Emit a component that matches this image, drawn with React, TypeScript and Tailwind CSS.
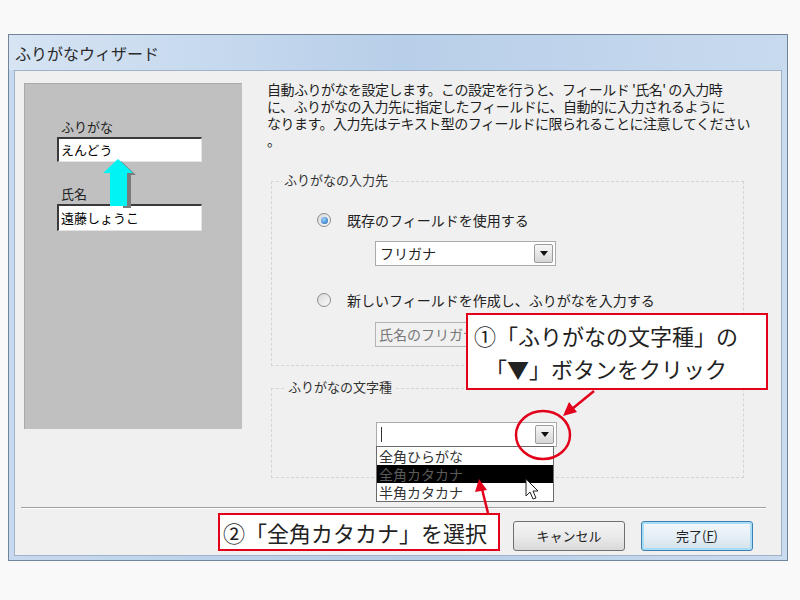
import React from "react";

// Win7 style combo arrow button
function DropButton() {
  return (
    <div className="flex h-full w-[19px] items-center justify-center rounded-[2px] border border-[#9c9c9c] bg-linear-to-b from-[#f7f7f7] to-[#d6d6d6]">
      <svg width="8" height="5" viewBox="0 0 8 5">
        <path d="M0 0h8L4 5z" fill="#111" />
      </svg>
    </div>
  );
}

function Combo({ value, className = "" }: { value?: React.ReactNode; className?: string }) {
  return (
    <div className={`flex h-[25px] w-[181px] items-stretch border border-[#ababab] bg-white p-[2px] ${className}`}>
      <div className="flex flex-1 items-center pl-[2px] text-[14px] text-[#222]">{value}</div>
      <DropButton />
    </div>
  );
}

function Radio({ checked }: { checked?: boolean }) {
  return (
    <div className="flex h-[14px] w-[14px] items-center justify-center rounded-full border border-[#8c8c8c] bg-linear-to-br from-[#d8d8d8] to-[#fbfbfb]">
      {checked && (
        <div className="h-[7px] w-[7px] rounded-full bg-[radial-gradient(circle_at_40%_35%,#9ad6ff,#1a5fb0)]" />
      )}
    </div>
  );
}

function SunkenBox({ text, className = "" }: { text: string; className?: string }) {
  return (
    <div
      className={`ml-[32px] flex w-[145px] items-center border-t-2 border-l-2 border-r border-b border-t-[#3a3a3a] border-l-[#3a3a3a] border-r-[#e4e4e4] border-b-[#e4e4e4] bg-white pl-[2px] text-[13px] text-black ${className}`}
    >
      {text}
    </div>
  );
}

function GroupBox({
  label,
  labelLeft,
  className = "",
  children,
}: {
  label: string;
  labelLeft: string;
  className?: string;
  children?: React.ReactNode;
}) {
  return (
    <div className={`relative ml-[4px] w-[473px] border border-dashed border-[#d4d4d4] ${className}`}>
      <span className={`absolute top-[-10px] bg-[#f0f0f0] px-[2px] text-[13px] leading-[16px] text-[#333] ${labelLeft}`}>
        {label}
      </span>
      {children}
    </div>
  );
}

export default function App() {
  return (
    <div className="relative h-[600px] w-[800px] overflow-hidden bg-[#f9f9f9] font-['Noto_Sans_CJK_JP','Noto_Sans',sans-serif]">
      {/* window */}
      <div className="ml-[8px] mt-[34px] flex h-[527px] w-[780px] flex-col border border-[#71849a] bg-linear-to-r from-[#c6d9ee] via-[#b6cde8] to-[#c9dbef]">
        {/* title bar */}
        <div className="flex h-[35px] items-center bg-linear-to-r from-[#d6e4f3] via-[#b8cfe9] to-[#c8daee] pl-[6px] pt-[1px] text-[16px] text-[#2a2a2a]">
          ふりがなウィザード
        </div>

        {/* client area */}
        <div className="mx-[5px] mb-[4px] flex flex-1 flex-col border border-[#9fb2c7] bg-[#f0f0f0]">
          <div className="flex h-[436px] pl-[9px] pt-[12px]">
            {/* left illustration */}
            <div className="relative h-[346px] w-[218px] border-t border-l border-t-[#aaaaaa] border-l-[#aaaaaa] bg-[#c0c0c0] pt-[35px]">
              <div className="ml-[36px] text-[13px] leading-[16px] text-[#222]">ふりがな</div>
              <SunkenBox text="えんどう" className="mt-[2px] h-[25px]" />
              <div className="ml-[36px] mt-[24px] text-[13px] leading-[16px] text-[#222]">氏名</div>
              <SunkenBox text="遠藤しょうこ" className="mt-[2px] h-[27px]" />
              <svg className="absolute left-[75px] top-[74px]" width="40" height="52" viewBox="0 0 40 52">
                <polygon points="21,3 36,17 31,17 31,50 23,50 23,17" fill="#7a7a7a" />
                <polygon points="18,1 33,15 27,15 27,48 10,48 10,15 3,15" fill="#00f4f4" />
              </svg>
            </div>

            {/* right column */}
            <div className="ml-[25px] w-[477px]">
              <p className="-mt-[2px] whitespace-nowrap text-[14px] leading-[17px] tracking-[-0.5px] text-[#1e1e1e]">
                自動ふりがなを設定します。この設定を行うと、フィールド '氏名' の入力時
                <br />
                に、ふりがなの入力先に指定したフィールドに、自動的に入力されるように
                <br />
                なります。入力先はテキスト型のフィールドに限られることに注意してください
                <br />。
              </p>

              <GroupBox label="ふりがなの入力先" labelLeft="left-[10px]" className="mt-[32px] h-[185px]">
                <div className="mt-[29px] flex h-[18px] items-center gap-[16px] pl-[45px] text-[14px] text-[#222]">
                  <Radio checked />
                  <span>既存のフィールドを使用する</span>
                </div>
                <Combo value="フリガナ" className="ml-[103px] mt-[12px]" />
                <div className="mt-[25px] flex h-[18px] items-center gap-[16px] pl-[45px] text-[14px] text-[#222]">
                  <Radio />
                  <span>新しいフィールドを作成し、ふりがなを入力する</span>
                </div>
                <div className="ml-[103px] mt-[13px] flex h-[25px] w-[181px] items-center border border-[#b4b4b4] bg-[#f0f0f0] pl-[3px] text-[14px] text-[#777]">
                  氏名のフリガナ
                </div>
              </GroupBox>

              <GroupBox label="ふりがなの文字種" labelLeft="left-[14px]" className="mt-[22px] h-[90px]">
                <Combo
                  value={<span className="h-[15px] w-[1px] bg-[#333]" />}
                  className="ml-[104px] mt-[33px] h-[24px] w-[178px]"
                />
                <div className="absolute left-[104px] top-[57px] z-10 w-[178px] border border-[#6a6a6a] bg-white text-[14px] leading-[18px]">
                  <div className="pl-[2px] text-[#333]">全角ひらがな</div>
                  <div className="bg-black pl-[2px] text-[#5a5a5a]">全角カタカナ</div>
                  <div className="pl-[2px] text-[#333]">半角カタカナ</div>
                </div>
              </GroupBox>
            </div>
          </div>

          {/* separator */}
          <div className="ml-[6px] mr-[15px] border-t border-b border-t-[#a0a0a0] border-b-white" />

          {/* buttons */}
          <div className="mt-[12px] flex justify-end gap-[16px] pr-[28px]">
            <button className="h-[30px] w-[112px] rounded-[3px] border border-[#707070] bg-linear-to-b from-[#f3f3f3] via-[#ebebeb] to-[#d9d9d9] text-[13px] text-[#222]">
              キャンセル
            </button>
            <button className="h-[30px] w-[112px] rounded-[3px] border border-[#3c7fb1] bg-linear-to-b from-[#f2f8fc] via-[#e6eff6] to-[#d4e2ec] text-[13px] text-[#222] shadow-[inset_0_0_0_2px_#a9ddf7]">
              完了(<span className="underline">F</span>)
            </button>
          </div>
        </div>
      </div>

      {/* callout 1 */}
      <div className="absolute left-[466px] top-[313px] z-20 flex h-[77px] w-[302px] flex-col items-center justify-center border-2 border-[#e2001a] bg-white pr-[22px] text-[22px] leading-[33px] text-[#222]">
        <div>①「ふりがなの文字種」の</div>
        <div>「▼」ボタンをクリック</div>
      </div>

      {/* callout 2 */}
      <div className="absolute left-[218px] top-[513px] z-20 flex h-[38px] w-[282px] items-center border-2 border-[#e2001a] bg-white pl-[3px] text-[22px] leading-[30px] text-[#222]">
        ②「全角カタカナ」を選択
      </div>

      {/* annotation drawing */}
      <svg className="pointer-events-none absolute left-0 top-0 z-30" width="800" height="600" viewBox="0 0 800 600">
        <ellipse cx="543" cy="435" rx="27" ry="24" fill="none" stroke="#e2001a" strokeWidth="2.5" />
        <line x1="594" y1="391" x2="572" y2="409" stroke="#e2001a" strokeWidth="2.5" />
        <polygon points="563,416 569,402 577,412" fill="#e2001a" />
        <line x1="488" y1="513" x2="482" y2="489" stroke="#e2001a" strokeWidth="2.5" />
        <polygon points="479,479 475,492 487,490" fill="#e2001a" />
        <g transform="translate(526 479)">
          <path d="M0 0 L0 17 L4 13 L7 20 L10 19 L7 12 L12 12 Z" fill="#fff" stroke="#222" strokeWidth="1" strokeLinejoin="round" />
        </g>
      </svg>
    </div>
  );
}
